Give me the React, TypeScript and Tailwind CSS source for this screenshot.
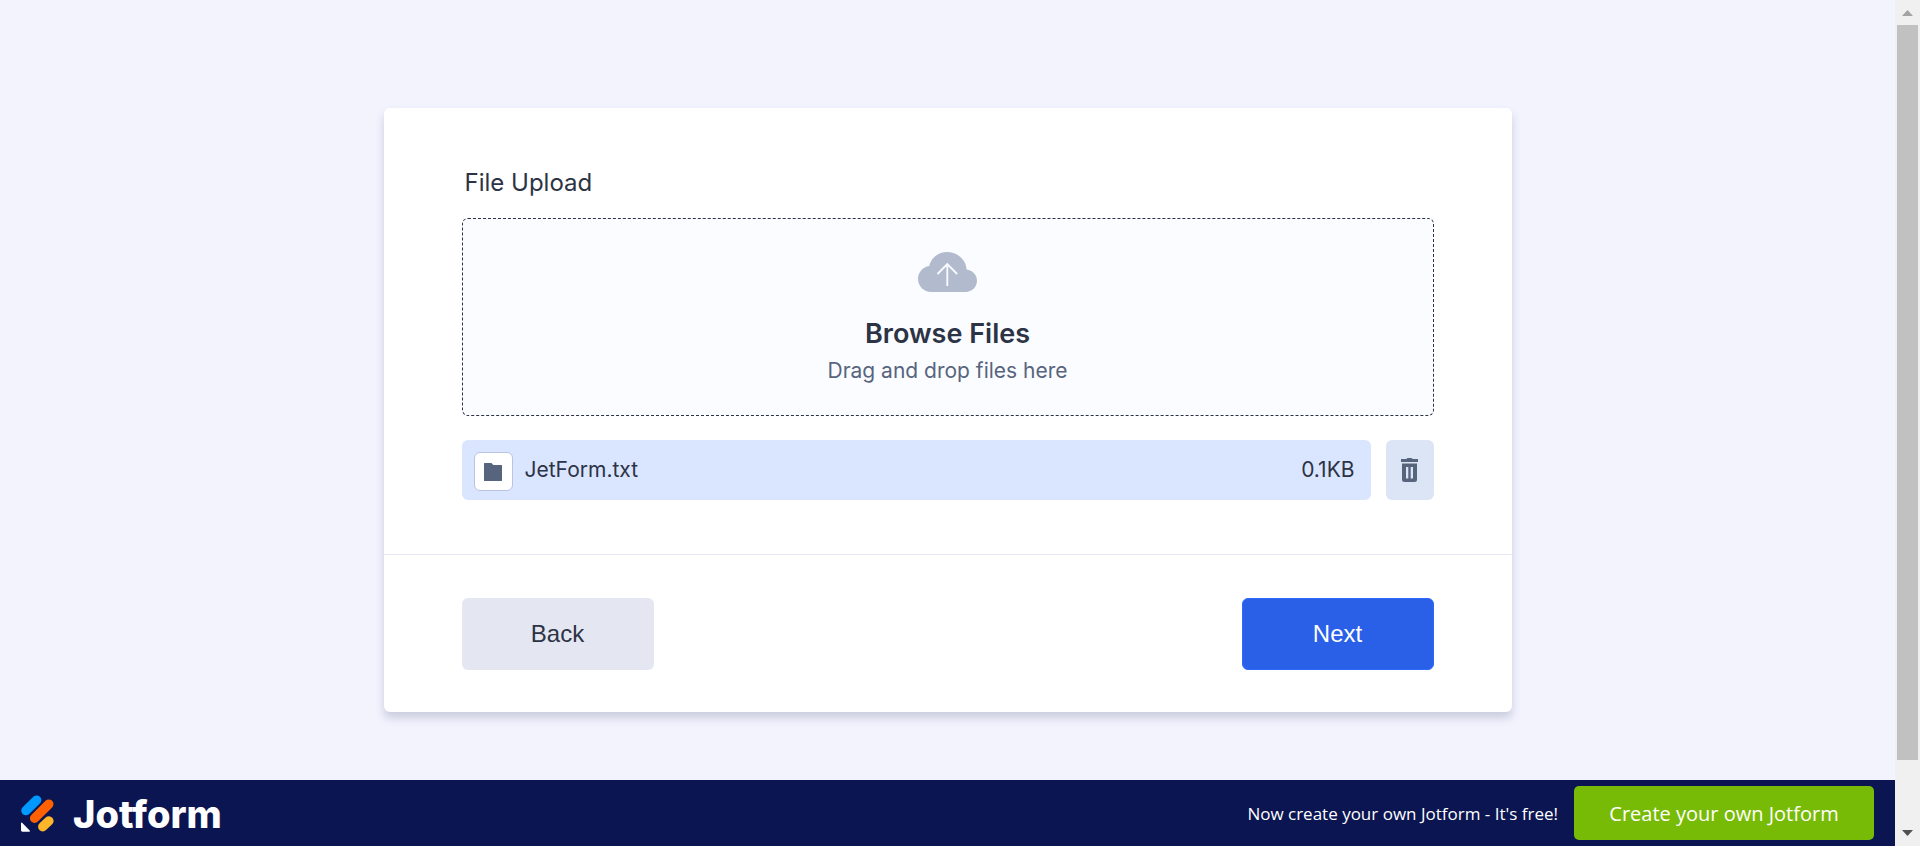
import React from "react";

function CloudUploadIcon() {
  return (
    <svg width="59" height="40" viewBox="0 0 59 40" aria-hidden="true">
      <path
        fill="#b2bbcd"
        d="M11.2 13.9C13.2 5.8 20.4 0 29 0c10.500 0 19 7.800 19.600 17.400C54.400 18.100 59 22.700 59 28.500 59 34.900 53.900 40 47.500 40H13.200C5.900 40 0 34.100 0 26.900c0-6.600 4.900-12.100 11.200-13Z"
      />
      <path
        d="M29.300 34V12.300M19.500 22l9.800-9.900 9.800 9.900"
        fill="none"
        stroke="#fbfcff"
        strokeWidth="1.800"
      />
    </svg>
  );
}

function FolderIcon() {
  return (
    <svg width="18" height="18" viewBox="0 0 18 18" aria-hidden="true">
      <path
        fill="#57647e"
        d="M.5 0h6.300c.5 0 .8.1 1.100.5L9.300 2h8.200c.3 0 .5.200.5.500V17.500c0 .3-.2.500-.5.500H.5a.5.500 0 0 1-.5-.5V.5C0 .2.200 0 .5 0Z"
      />
    </svg>
  );
}

function TrashIcon() {
  return (
    <svg width="17" height="24" viewBox="0 0 17 24" aria-hidden="true">
      <path
        fill="#57647e"
        fillRule="evenodd"
        d="M5.500.9C5.700.3 6.100 0 6.700 0h3.600c.6 0 1 .3 1.200.9H17V4H0V.9h5.500ZM1 5.500h15V21.500a2.500 2.500 0 0 1-2.500 2.500h-10A2.500 2.500 0 0 1 1 21.500v-16ZM5 9v11.500h2.300V9H5Zm4.700 0v11.500H12V9H9.700Z"
      />
    </svg>
  );
}

function LogoMark() {
  return (
    <svg width="33" height="37" viewBox="0 0 33 37" aria-hidden="true">
      <g fill="none" strokeLinecap="round" strokeWidth="9.400">
        <path stroke="#0099ff" d="M4.900 15.600 15.600 5.100" />
        <path stroke="#ff6100" d="M13.600 23.300 27.800 9.100" />
        <path stroke="#ffb629" d="M21.800 31.700 27.900 25.900" />
      </g>
      <path
        fill="#fff"
        d="M0 28.200c0-.7.600-.9 1.100-.4l7.600 7.600c.5.500.2 1.300-.6 1.300H1.500C.6 36.700 0 36.200 0 35.300v-7.100Z"
      />
    </svg>
  );
}

function Scrollbar() {
  return (
    <div
      aria-hidden="true"
      className="sticky top-0 flex h-screen w-[25px] shrink-0 flex-col items-center bg-[#f0f0f0]"
    >
      <div className="flex h-[25px] items-center">
        <svg width="11" height="6" viewBox="0 0 11 6">
          <path fill="#a3a3a3" d="M5.500 0 11 6H0Z" />
        </svg>
      </div>
      <div className="w-[21px] grow-[735] basis-0 bg-[#c1c1c1]" />
      <div className="flex grow-[86] basis-0 items-end">
        <svg className="mb-[10px]" width="11" height="6" viewBox="0 0 11 6">
          <path fill="#505050" d="M0 0h11L5.500 6Z" />
        </svg>
      </div>
    </div>
  );
}

function UploadCard() {
  return (
    <form
      onSubmit={(event) => event.preventDefault()}
      className="w-full max-w-[1128px] rounded-md bg-white shadow-[0_6px_9px_rgba(84,95,126,0.25)]"
    >
      <section className="px-[78px] pt-[60px] pb-[54px]">
        <label htmlFor="files" className="block px-[3px] text-2xl leading-[30px]">
          File Upload
        </label>
        <label
          htmlFor="files"
          className="mt-5 flex cursor-pointer flex-col items-center rounded-md border border-dashed border-[#2c3345] bg-[#fbfcff] pt-[33px] pb-7 focus-within:border-[#2a60e8]"
        >
          <CloudUploadIcon />
          <span className="mt-6 text-[27px] leading-9 font-semibold">Browse Files</span>
          <span className="mt-[3px] text-[21px] leading-8 text-[#57647e]">
            Drag and drop files here
          </span>
          <input id="files" type="file" multiple className="sr-only" />
        </label>
        <div className="mt-6 flex gap-[15px]">
          <div className="flex h-[60px] grow items-center rounded-md bg-[#dae5ff] pr-4 pl-3 text-[21px]">
            <span className="mt-[3px] flex size-[39px] items-center justify-center rounded-md border border-[#b8c4e0] bg-white">
              <FolderIcon />
            </span>
            <span className="ml-3 grow">JetForm.txt</span>
            <span>0.1KB</span>
          </div>
          <button
            type="button"
            aria-label="Delete file"
            className="flex w-12 items-center justify-center rounded-md bg-[#dce5f5]"
          >
            <TrashIcon />
          </button>
        </div>
      </section>
      <div className="flex justify-between border-t border-[#e6e6f4] px-[78px] pt-[43px] pb-[42px] font-['Liberation_Sans',Arial,sans-serif] text-2xl">
        <button type="button" className="h-[72px] w-[192px] rounded-md bg-[#e4e7f2]">
          Back
        </button>
        <button
          type="submit"
          className="h-[72px] w-[192px] rounded-md border border-[#2e69ff] bg-[#2a60e8] text-white"
        >
          Next
        </button>
      </div>
    </form>
  );
}

function Footer() {
  return (
    <footer className="flex h-[66px] items-center justify-between bg-[#0a1551] px-[21px] font-['Open_Sans','Noto_Sans',sans-serif] text-white">
      <a href="#home" aria-label="Jotform" className="flex items-center gap-[19px]">
        <LogoMark />
        <span className="pt-0.5 font-['Inter',sans-serif] text-[38px] leading-[48px] font-extrabold">
          Jotform
        </span>
      </a>
      <div className="flex items-center gap-4">
        <span className="pt-0.5 text-[17px]">Now create your own Jotform - It's free!</span>
        <a
          href="#create"
          className="flex h-[54px] w-[300px] items-center justify-center rounded-[5px] bg-[#78bb07] pt-0.5 text-xl"
        >
          Create your own Jotform
        </a>
      </div>
    </footer>
  );
}

export default function App() {
  return (
    <div className="flex min-h-screen bg-[#f3f3fe] font-['Inter',sans-serif] text-[#2c3345]">
      <div className="flex min-w-0 grow flex-col">
        <main className="flex grow justify-center px-6 pt-[108px] pb-[68px]">
          <UploadCard />
        </main>
        <Footer />
      </div>
      <Scrollbar />
    </div>
  );
}
